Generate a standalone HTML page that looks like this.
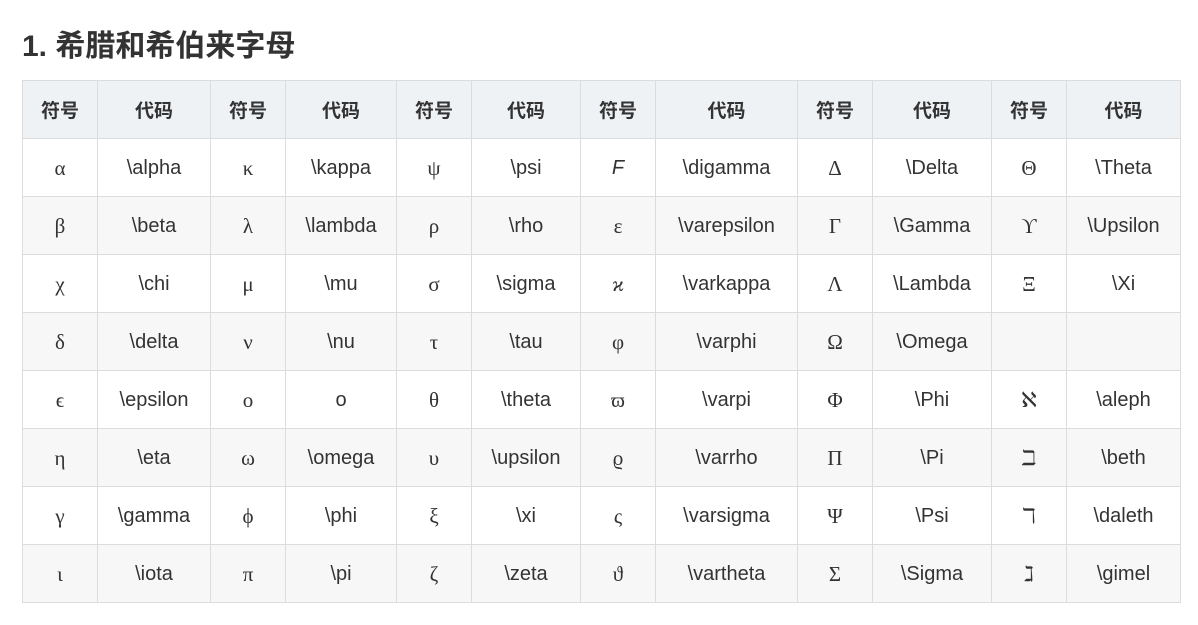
<!DOCTYPE html>
<html><head><meta charset="utf-8"><style>
body{margin:0;background:#fff;color:#333;font-family:"Liberation Sans","Noto Sans CJK SC",sans-serif;}
h2{position:absolute;left:22px;top:28px;margin:0;font-size:30px;line-height:38px;font-weight:bold;color:#333;}
table{position:absolute;left:22px;top:80px;border-collapse:collapse;table-layout:fixed;width:1159px;}
td,th{border:1px solid #dcdcdc;text-align:center;height:57px;padding:2px 0 0 0;font-size:20px;box-sizing:border-box;}
td{height:58px;}
th{background:#eff2f5;font-weight:bold;font-size:19px;height:58px;padding:0;}
tbody tr:nth-child(even) td{background:#f7f7f7;}
td.s{font-family:"Liberation Serif","DejaVu Serif",serif;font-size:21px;}
td.f{font-family:"Liberation Sans",sans-serif;font-style:italic;font-size:20px;}
</style></head><body>
<h2>1. 希腊和希伯来字母</h2>
<table>
<colgroup><col style="width:75px"><col style="width:113px"><col style="width:75px"><col style="width:111px"><col style="width:75px"><col style="width:109px"><col style="width:75px"><col style="width:142px"><col style="width:75px"><col style="width:119px"><col style="width:75px"><col style="width:114px"></colgroup>
<thead><tr><th>符号</th><th>代码</th><th>符号</th><th>代码</th><th>符号</th><th>代码</th><th>符号</th><th>代码</th><th>符号</th><th>代码</th><th>符号</th><th>代码</th></tr></thead>
<tbody>
<tr><td class="s">α</td><td>\alpha</td><td class="s">κ</td><td>\kappa</td><td class="s">ψ</td><td>\psi</td><td class="f">F</td><td>\digamma</td><td class="s">Δ</td><td>\Delta</td><td class="s">Θ</td><td>\Theta</td></tr>
<tr><td class="s">β</td><td>\beta</td><td class="s">λ</td><td>\lambda</td><td class="s">ρ</td><td>\rho</td><td class="s">ε</td><td>\varepsilon</td><td class="s">Γ</td><td>\Gamma</td><td class="s">ϒ</td><td>\Upsilon</td></tr>
<tr><td class="s">χ</td><td>\chi</td><td class="s">μ</td><td>\mu</td><td class="s">σ</td><td>\sigma</td><td class="s"><i>ϰ</i></td><td>\varkappa</td><td class="s">Λ</td><td>\Lambda</td><td class="s">Ξ</td><td>\Xi</td></tr>
<tr><td class="s">δ</td><td>\delta</td><td class="s">ν</td><td>\nu</td><td class="s">τ</td><td>\tau</td><td class="s">φ</td><td>\varphi</td><td class="s">Ω</td><td>\Omega</td><td></td><td></td></tr>
<tr><td class="s">ϵ</td><td>\epsilon</td><td class="s">ο</td><td>o</td><td class="s">θ</td><td>\theta</td><td class="s">ϖ</td><td>\varpi</td><td class="s">Φ</td><td>\Phi</td><td class="s">ℵ</td><td>\aleph</td></tr>
<tr><td class="s">η</td><td>\eta</td><td class="s">ω</td><td>\omega</td><td class="s">υ</td><td>\upsilon</td><td class="s">ϱ</td><td>\varrho</td><td class="s">Π</td><td>\Pi</td><td class="s">ℶ</td><td>\beth</td></tr>
<tr><td class="s">γ</td><td>\gamma</td><td class="s">ϕ</td><td>\phi</td><td class="s">ξ</td><td>\xi</td><td class="s">ς</td><td>\varsigma</td><td class="s">Ψ</td><td>\Psi</td><td class="s">ℸ</td><td>\daleth</td></tr>
<tr><td class="s">ι</td><td>\iota</td><td class="s">π</td><td>\pi</td><td class="s">ζ</td><td>\zeta</td><td class="s">ϑ</td><td>\vartheta</td><td class="s">Σ</td><td>\Sigma</td><td class="s">ℷ</td><td>\gimel</td></tr>
</tbody></table>
</body></html>
